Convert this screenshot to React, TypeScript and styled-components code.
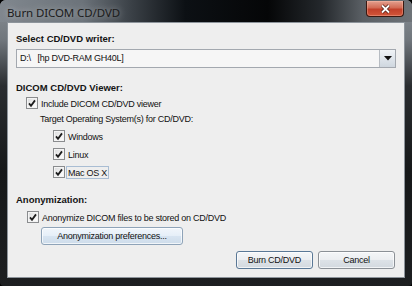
import React from "react"
import styled, { createGlobalStyle } from "styled-components"

const GlobalStyle = createGlobalStyle`
  html, body {
    margin: 0;
    padding: 0;
    background: #000;
  }
  * {
    box-sizing: border-box;
  }
`

const font = `"Liberation Sans", Arial, sans-serif`

const Window = styled.div`
  width: 412px;
  height: 286px;
  display: flex;
  flex-direction: column;
  background: linear-gradient(
    180deg,
    #8a9096 0%,
    #70767c 14%,
    #2a2d30 30%,
    #161819 60%,
    #1d1f21 100%
  );
  border-radius: 6px 6px 4px 4px;
  font-family: ${font};
  font-size: 9px;
  letter-spacing: -0.25px;
  color: #111;
  overflow: hidden;
`

const TitleBar = styled.div`
  height: 22px;
  flex-shrink: 0;
  display: flex;
  align-items: flex-start;
  padding: 0 8px 0 7px;
  background: linear-gradient(
    90deg,
    #80878e 0%,
    #6c737a 20%,
    #3a4046 32%,
    #0c1014 45%,
    #050607 65%,
    #24282c 78%,
    #5a5f64 88%,
    #6e7378 100%
  );
`

const Title = styled.span`
  margin-top: 5px;
  font-family: "Noto Sans", sans-serif;
  font-size: 11.5px;
  letter-spacing: -0.1px;
  color: #1b1b1b;
  text-shadow: 0 0 6px rgba(255, 255, 255, 0.5);
`

const CloseButton = styled.div`
  margin-left: auto;
  margin-top: 1px;
  width: 38px;
  height: 16px;
  display: flex;
  align-items: center;
  justify-content: center;
  border: 1px solid #3b1810;
  border-top: none;
  border-radius: 0 0 4px 4px;
  background: linear-gradient(180deg, #e3a08f 0%, #d26b55 45%, #c2402a 55%, #d2563a 100%);
  box-shadow: inset 0 0 0 1px rgba(255, 200, 180, 0.35);
`

const Client = styled.div`
  flex: 1;
  margin: 0 7px 8px 7px;
  display: flex;
  flex-direction: column;
  padding: 9px 8px 8px 8px;
  background: #eeeeee;
  border: 1px solid #8d949b;
`

const SectionLabel = styled.div<{ $top?: number }>`
  height: 14px;
  line-height: 14px;
  margin-top: ${(p) => p.$top ?? 0}px;
  font-weight: bold;
  font-size: 9.5px;
  letter-spacing: 0;
  color: #141414;
`

const Combo = styled.div`
  margin-top: 3px;
  height: 19px;
  display: flex;
  border: 1px solid #a3a8af;
  background: #f6f6f6;
`

const ComboText = styled.div`
  flex: 1;
  padding-left: 3px;
  line-height: 17px;
  white-space: pre;
`

const ComboArrow = styled.div`
  width: 16px;
  display: flex;
  align-items: center;
  justify-content: center;
  border-left: 1px solid #b7bcc2;
  background: linear-gradient(180deg, #f0f3f6 0%, #dfe5eb 50%, #cfd7df 100%);
`

const Row = styled.div<{ $indent: number; $height?: number; $top?: number }>`
  height: ${(p) => p.$height ?? 16}px;
  margin-top: ${(p) => p.$top ?? 0}px;
  padding-left: ${(p) => p.$indent}px;
  display: flex;
  align-items: center;
  gap: 1px;
  white-space: nowrap;
`

const Box = styled.span`
  width: 12px;
  height: 12px;
  flex-shrink: 0;
  display: inline-flex;
  align-items: center;
  justify-content: center;
  border: 1px solid #8a8c8e;
  background: linear-gradient(135deg, #d9dadb 0%, #f3f3f3 60%, #ffffff 100%);
  box-shadow: inset 0 0 0 1px #f4f4f4;
`

const Label = styled.span<{ $focused?: boolean }>`
  padding: 1px 1px 0 1px;
  border: 1px solid ${(p) => (p.$focused ? "#a9bdd3" : "transparent")};
  line-height: 10px;
`

const Button = styled.div<{ $width: number; $default?: boolean }>`
  width: ${(p) => p.$width}px;
  height: 18px;
  display: flex;
  align-items: center;
  justify-content: center;
  border: 1px solid ${(p) => (p.$default ? "#5a7896" : "#8b9096")};
  border-radius: 3px;
  background: linear-gradient(180deg, #f4f6f8 0%, #eceef1 48%, #dde2e7 52%, #d3d9df 100%);
  box-shadow: inset 0 0 0 1px rgba(255, 255, 255, 0.7);
  white-space: nowrap;
`

const PrefsButton = styled(Button)`
  margin-top: 2px;
  margin-left: 25px;
  background: linear-gradient(180deg, #f1f6fb 0%, #e6eff8 48%, #d7e4f1 52%, #cedcea 100%);
  border-color: #8ea3b8;
`

const Footer = styled.div`
  margin-top: auto;
  display: flex;
  justify-content: flex-end;
  gap: 5px;
  padding-right: 1px;
`

const Check = ({ indent, label, top, height, focused }: {
  indent: number
  label: string
  top?: number
  height?: number
  focused?: boolean
}) => (
  <Row $indent={indent} $top={top} $height={height}>
    <Box>
      <svg width="10" height="10" viewBox="0 0 10 10">
        <path d="M2 5.4 L4 7.8 L8 2.4" fill="none" stroke="#1d1d1d" strokeWidth="1.8" />
      </svg>
    </Box>
    <Label $focused={focused}>{label}</Label>
  </Row>
)

export default function App() {
  return (
    <>
      <GlobalStyle />
      <Window>
        <TitleBar>
          <Title>Burn DICOM CD/DVD</Title>
          <CloseButton>
            <svg width="11" height="10" viewBox="0 0 11 10">
              <path d="M2 1.5 L9 8.5 M9 1.5 L2 8.5" stroke="#4a1a10" strokeWidth="3.2" />
              <path d="M2 1.5 L9 8.5 M9 1.5 L2 8.5" stroke="#ffffff" strokeWidth="1.8" />
            </svg>
          </CloseButton>
        </TitleBar>
        <Client>
          <SectionLabel>Select CD/DVD writer:</SectionLabel>
          <Combo>
            <ComboText>{"D:\\   [hp DVD-RAM GH40L]"}</ComboText>
            <ComboArrow>
              <svg width="8" height="5" viewBox="0 0 8 5">
                <path d="M0 0 H8 L4 4.5 Z" fill="#111" />
              </svg>
            </ComboArrow>
          </Combo>
          <SectionLabel $top={13}>DICOM CD/DVD Viewer:</SectionLabel>
          <Check indent={10} label="Include DICOM CD/DVD viewer" />
          <Row $indent={24}>Target Operating System(s) for CD/DVD:</Row>
          <Check indent={37} label="Windows" height={18} />
          <Check indent={37} label="Linux" height={18} />
          <Check indent={37} label="Mac OS X" height={18} focused />
          <SectionLabel $top={12}>Anonymization:</SectionLabel>
          <Check indent={11} label="Anonymize DICOM files to be stored on CD/DVD" top={2} />
          <PrefsButton $width={142}>Anonymization preferences...</PrefsButton>
          <Footer>
            <Button $width={77} $default>Burn CD/DVD</Button>
            <Button $width={77}>Cancel</Button>
          </Footer>
        </Client>
      </Window>
    </>
  )
}
